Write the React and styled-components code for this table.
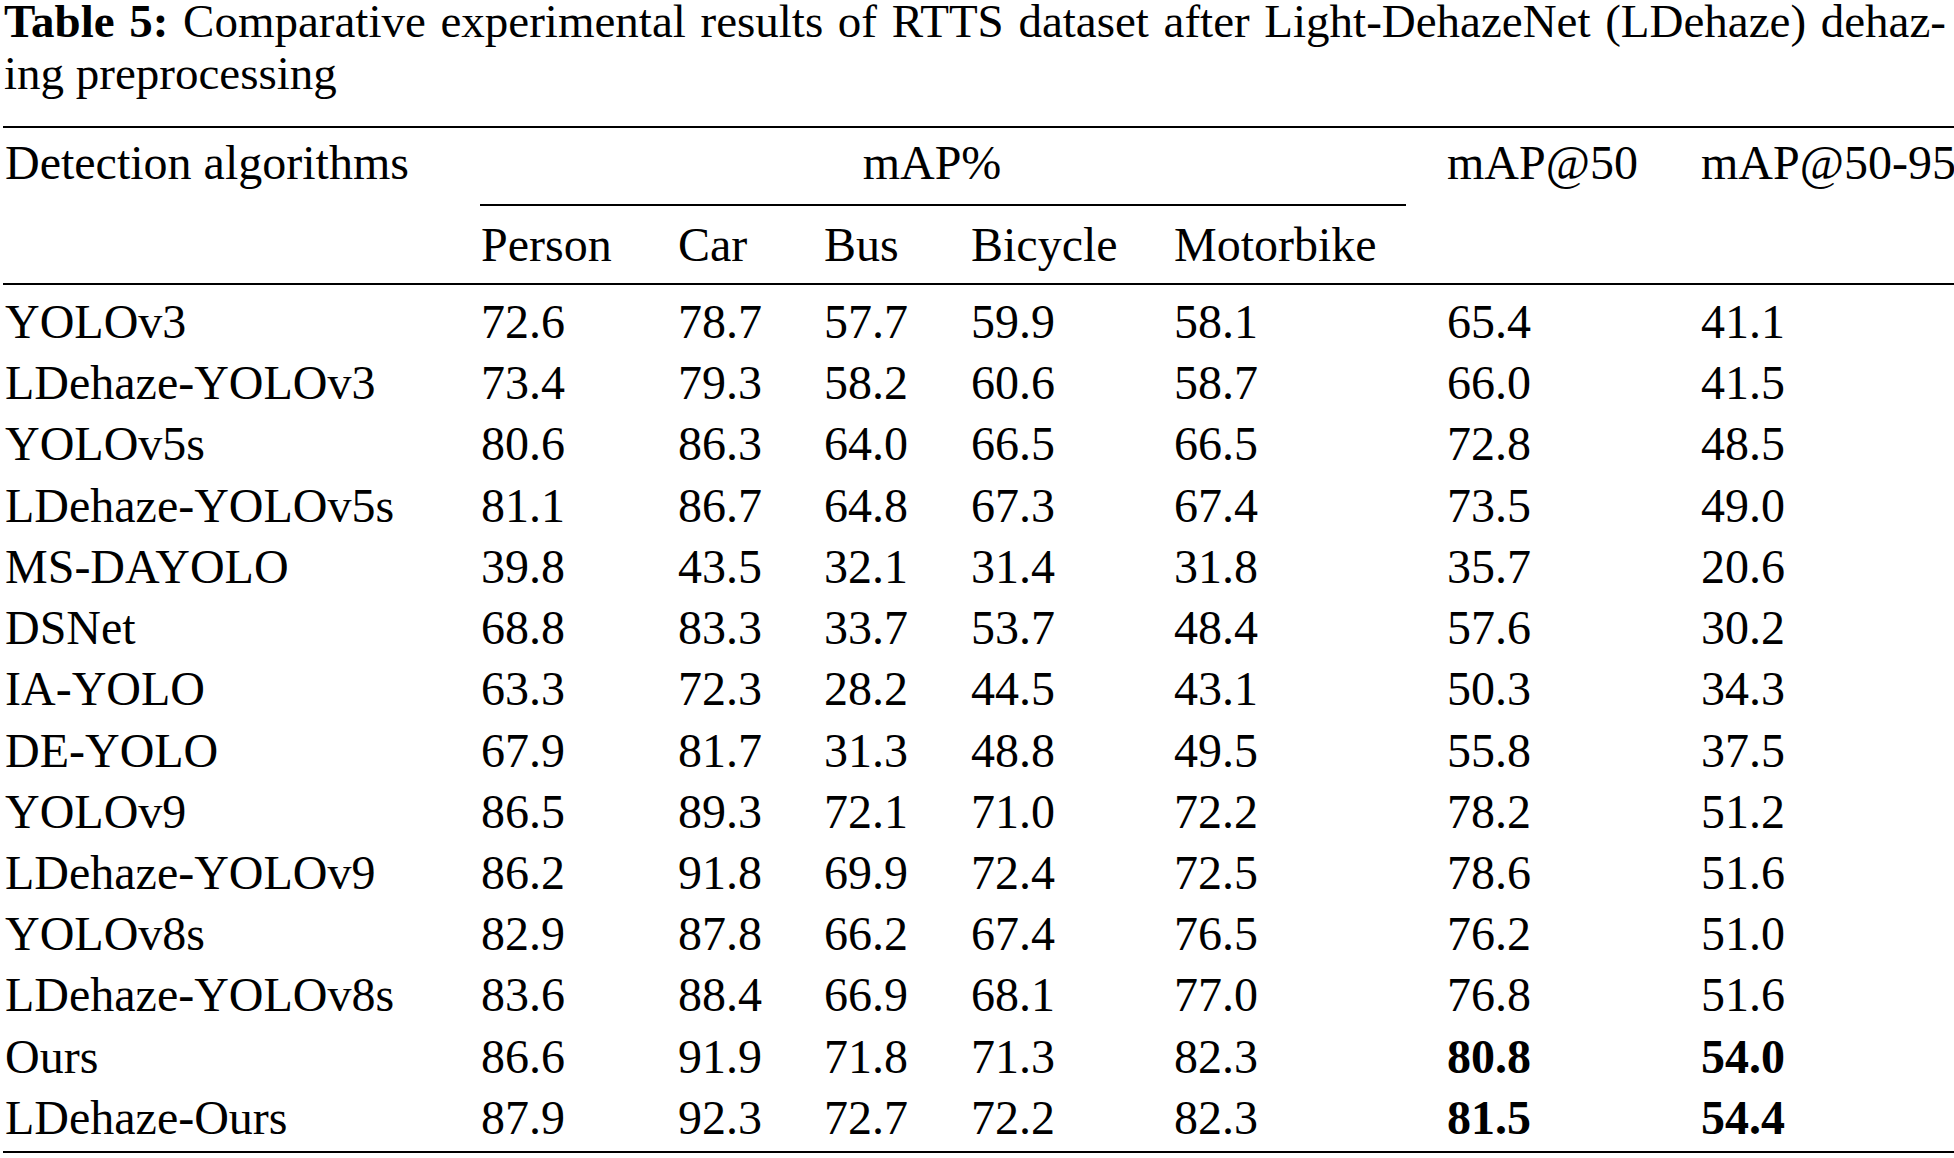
import React from "react";
import styled, { createGlobalStyle, css } from "styled-components";

const Global = createGlobalStyle`
  html, body {
    margin: 0;
    padding: 0;
    background: #ffffff;
    overflow: hidden;
  }
  body {
    font-family: "Liberation Serif", "Times New Roman", serif;
    color: #000000;
  }
`;

const Page = styled.div`
  width: 1951px;
  padding-left: 3px;
  font-family: "Liberation Serif", "Times New Roman", serif;
  font-size: 48px;
  color: #000;
`;

const Caption = styled.div`
  display: flex;
  flex-direction: column;
  gap: 10px;
  margin: 0 8px 32px 1px;
  line-height: 42px;
  font-size: 47px;
`;

const CaptionLine = styled.div`
  text-align: ${(p) => (p.$justify ? "justify" : "left")};
  text-align-last: ${(p) => (p.$justify ? "justify" : "auto")};
  white-space: nowrap;
`;

const Label = styled.b`
  font-weight: 700;
`;

const cols = css`
  display: grid;
  grid-template-columns: 478px 197px 146px 147px 203px 273px 254px 253px;
`;

const Header = styled.div`
  ${cols};
  border-top: 2px solid #000;
  border-bottom: 2px solid #000;
  line-height: 61px;
`;

const HeadCell = styled.div`
  grid-column: ${(p) => p.$col};
  grid-row: ${(p) => p.$row};
  padding-top: ${(p) => p.$pt ?? 4}px;
  padding-bottom: ${(p) => p.$pb ?? 0}px;
  padding-left: ${(p) => (p.$first ? 2 : 0)}px;
  white-space: nowrap;
`;

const GroupCell = styled.div`
  grid-column: 2 / 7;
  grid-row: 1;
  margin: 0 41px 0 -1px;
  padding: 4px 22px 11px 0;
  border-bottom: 2px solid #000;
  text-align: center;
  white-space: nowrap;
`;

const Body = styled.div`
  padding: 6px 0 3px;
  border-bottom: 2px solid #000;
`;

const Row = styled.div`
  ${cols};
  height: 61.23px;
  line-height: 61.23px;
`;

const Cell = styled.div`
  padding-left: ${(p) => (p.$first ? 2 : 0)}px;
  font-weight: ${(p) => (p.$bold ? 700 : 400)};
  white-space: nowrap;
`;

const rows = [
  ["YOLOv3", "72.6", "78.7", "57.7", "59.9", "58.1", "65.4", "41.1"],
  ["LDehaze-YOLOv3", "73.4", "79.3", "58.2", "60.6", "58.7", "66.0", "41.5"],
  ["YOLOv5s", "80.6", "86.3", "64.0", "66.5", "66.5", "72.8", "48.5"],
  ["LDehaze-YOLOv5s", "81.1", "86.7", "64.8", "67.3", "67.4", "73.5", "49.0"],
  ["MS-DAYOLO", "39.8", "43.5", "32.1", "31.4", "31.8", "35.7", "20.6"],
  ["DSNet", "68.8", "83.3", "33.7", "53.7", "48.4", "57.6", "30.2"],
  ["IA-YOLO", "63.3", "72.3", "28.2", "44.5", "43.1", "50.3", "34.3"],
  ["DE-YOLO", "67.9", "81.7", "31.3", "48.8", "49.5", "55.8", "37.5"],
  ["YOLOv9", "86.5", "89.3", "72.1", "71.0", "72.2", "78.2", "51.2"],
  ["LDehaze-YOLOv9", "86.2", "91.8", "69.9", "72.4", "72.5", "78.6", "51.6"],
  ["YOLOv8s", "82.9", "87.8", "66.2", "67.4", "76.5", "76.2", "51.0"],
  ["LDehaze-YOLOv8s", "83.6", "88.4", "66.9", "68.1", "77.0", "76.8", "51.6"],
  ["Ours", "86.6", "91.9", "71.8", "71.3", "82.3", "80.8", "54.0", true],
  ["LDehaze-Ours", "87.9", "92.3", "72.7", "72.2", "82.3", "81.5", "54.4", true],
];

const subs = ["Person", "Car", "Bus", "Bicycle", "Motorbike"];

export default function App() {
  return (
    <Page>
      <Global />
      <Caption>
        <CaptionLine $justify>
          <Label>Table 5:</Label> Comparative experimental results of RTTS dataset after Light-DehazeNet (LDehaze) dehaz-
        </CaptionLine>
        <CaptionLine>ing preprocessing</CaptionLine>
      </Caption>
      <Header>
        <HeadCell $col="1" $row="1 / span 2" $first>
          Detection algorithms
        </HeadCell>
        <GroupCell>mAP%</GroupCell>
        <HeadCell $col="7" $row="1 / span 2">mAP@50</HeadCell>
        <HeadCell $col="8" $row="1 / span 2">mAP@50-95</HeadCell>
        {subs.map((s, i) => (
          <HeadCell key={s} $col={String(i + 2)} $row="2" $pt={8} $pb={8}>
            {s}
          </HeadCell>
        ))}
      </Header>
      <Body>
        {rows.map((r) => {
          const bold = r[8] === true;
          return (
            <Row key={r[0]}>
              {r.slice(0, 8).map((v, i) => (
                <Cell key={i} $first={i === 0} $bold={bold && i >= 6}>
                  {v}
                </Cell>
              ))}
            </Row>
          );
        })}
      </Body>
    </Page>
  );
}
